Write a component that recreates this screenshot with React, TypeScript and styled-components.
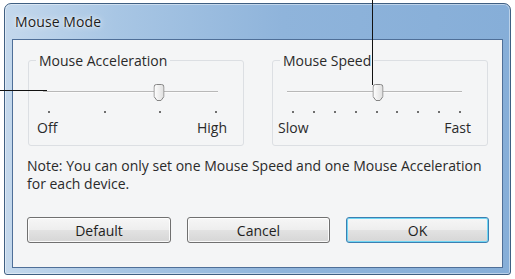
import React from "react";
import styled, { createGlobalStyle } from "styled-components";

const Global = createGlobalStyle`
  html, body { margin: 0; padding: 0; background: #ffffff; }
  body { font-family: "Open Sans", "Noto Sans", sans-serif; }
`;

const Page = styled.div`
  position: relative;
  width: 515px;
  height: 279px;
  overflow: hidden;
  background: #ffffff;
  padding: 3px 0 0 4px;
  box-sizing: border-box;
`;

const Window = styled.div`
  width: 507px;
  height: 272px;
  box-sizing: border-box;
  border: 1px solid #3f5f82;
  border-radius: 7px 7px 3px 3px;
  background: linear-gradient(to right, #c4d8ec 0%, #a8c6e4 22%, #8fb4db 55%, #86aed8 100%);
  display: flex;
  flex-direction: column;
  padding: 0 7px 6px 7px;
  box-shadow: inset 0 0 0 1px rgba(255, 255, 255, 0.45);
`;

const TitleBar = styled.div`
  height: 35px;
  display: flex;
  align-items: center;
  padding: 0 0 0 3px;
  font-size: 14px;
  color: #1c1c1c;
  text-shadow: 0 0 6px rgba(255, 255, 255, 0.9), 0 0 2px rgba(255, 255, 255, 0.9);
  letter-spacing: 0.1px;
`;

const Client = styled.div`
  flex: 1;
  border: 1px solid #4f6f98;
  background: #f4f5f6;
  padding: 12px 14px 0 14px;
  display: flex;
  flex-direction: column;
`;

const Groups = styled.div`
  display: grid;
  grid-template-columns: 216px 216px;
  column-gap: 28px;
  padding-left: 1px;
`;

const Group = styled.fieldset`
  margin: 0;
  padding: 0 0 9px 0;
  min-width: 0;
  border: 1px solid #dcdfe3;
  border-radius: 3px;
`;

const Legend = styled.legend`
  margin-left: 7px;
  padding: 0 3px;
  font-size: 14px;
  line-height: 17px;
  color: #2a2a2a;
`;

const SliderBox = styled.div<{ $left: number; $right: number }>`
  position: relative;
  margin: 15px ${(p) => p.$right}px 0 ${(p) => p.$left}px;
  height: 16px;
  display: flex;
  align-items: center;
`;

const Track = styled.div`
  width: 100%;
  height: 1px;
  background: #b8b8b8;
  border-bottom: 1px solid #fbfbfb;
`;

const Thumb = styled.svg`
  position: absolute;
  top: 0;
  width: 11px;
  height: 17px;
  transform: translateX(-50%);
`;

const Ticks = styled.div<{ $left: number; $right: number }>`
  margin: 11px ${(p) => p.$right}px 0 ${(p) => p.$left}px;
  height: 2px;
  display: flex;
  justify-content: space-between;
`;

const Tick = styled.span`
  width: 2px;
  height: 2px;
  background: #6f6f6f;
`;

const Ends = styled.div<{ $left: number; $right: number }>`
  margin-top: 7px;
  padding: 0 ${(p) => p.$right}px 0 ${(p) => p.$left}px;
  display: flex;
  justify-content: space-between;
  font-size: 14px;
  line-height: 16px;
  color: #2a2a2a;
`;

const Note = styled.p`
  margin: 11px 0 0 0;
  font-size: 14px;
  line-height: 18px;
  color: #2a2a2a;
`;

const Buttons = styled.div`
  margin-top: 24px;
  display: grid;
  grid-template-columns: 144px 143px 143px;
  column-gap: 16px;
`;

const Button = styled.button<{ $primary?: boolean }>`
  height: 26px;
  margin: 0;
  padding: 0;
  font-family: inherit;
  font-size: 14px;
  color: #1e1e1e;
  border-radius: 3px;
  border: 1px solid ${(p) => (p.$primary ? "#3c7fb1" : "#707070")};
  background: linear-gradient(to bottom, #f6f6f6 0%, #eeeeee 48%, #e2e2e2 52%, #d6d6d6 100%);
  box-shadow: inset 0 0 0 1px ${(p) => (p.$primary ? "#6fd6f4" : "rgba(255,255,255,0.85)")};
`;

const Callout = styled.div<{ $vertical?: boolean }>`
  position: absolute;
  background: #111;
  ${(p) =>
    p.$vertical
      ? "left: 372px; top: 0; width: 1px; height: 85px;"
      : "left: 0; top: 90px; width: 47px; height: 1px;"}
`;

type SliderProps = {
  id: string;
  label: string;
  ticks: number;
  value: number;
  lo: string;
  hi: string;
  endsLeft: number;
  nudge: number;
};

function Slider({ id, label, ticks, value, lo, hi, endsLeft, nudge }: SliderProps) {
  // ticks span from 5px into the track to 1px before its end
  const trackW = 216 - 2 - 14 - 25;
  const span = trackW - 6;
  const x = 5 + (span * value) / (ticks - 1) + 1 + nudge;
  const gid = `thumb-${id}`;
  return (
    <Group>
      <Legend>{label}</Legend>
      <SliderBox $left={14} $right={25}>
        <Track />
        <Thumb viewBox="0 0 11 17" style={{ left: x }}>
          <defs>
            <linearGradient id={gid} x1="0" y1="0" x2="1" y2="0">
              <stop offset="0" stopColor="#ffffff" />
              <stop offset="1" stopColor="#dedede" />
            </linearGradient>
          </defs>
          <path
            d="M3 0.5 H8 Q10.5 0.5 10.5 3 V12.5 L7.5 16.5 H3.5 L0.5 12.5 V3 Q0.5 0.5 3 0.5 Z"
            fill={`url(#${gid})`}
            stroke="#858585"
            strokeWidth="1"
          />
        </Thumb>
      </SliderBox>
      <Ticks $left={19} $right={26}>
        {Array.from({ length: ticks }).map((_, i) => (
          <Tick key={i} />
        ))}
      </Ticks>
      <Ends $left={endsLeft} $right={16}>
        <span>{lo}</span>
        <span>{hi}</span>
      </Ends>
    </Group>
  );
}

export default function App() {
  return (
    <>
      <Global />
      <Page>
        <Window>
          <TitleBar>Mouse Mode</TitleBar>
          <Client>
            <Groups>
              <Slider id="accel" label="Mouse Acceleration" ticks={4} value={2} lo="Off" hi="High" endsLeft={8} nudge={-3} />
              <Slider id="speed" label="Mouse Speed" ticks={9} value={4} lo="Slow" hi="Fast" endsLeft={5} nudge={0} />
            </Groups>
            <Note>
              Note: You can only set one Mouse Speed and one Mouse Acceleration
              <br />
              for each device.
            </Note>
            <Buttons>
              <Button>Default</Button>
              <Button>Cancel</Button>
              <Button $primary>OK</Button>
            </Buttons>
          </Client>
        </Window>
        <Callout $vertical />
        <Callout />
      </Page>
    </>
  );
}
